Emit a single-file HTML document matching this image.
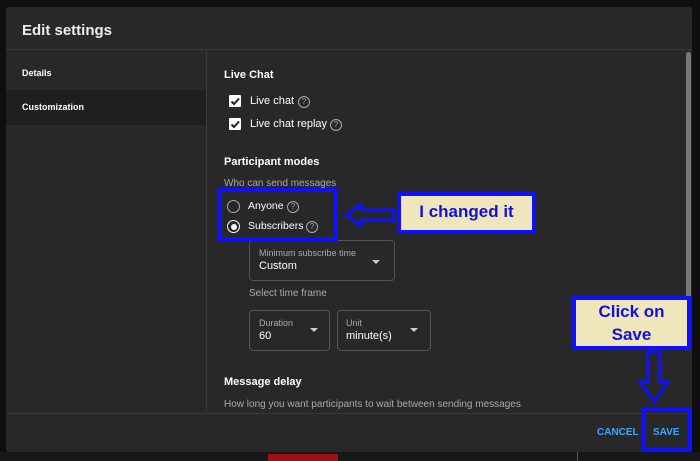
<!DOCTYPE html><html><head><style>
body{margin:0;width:700px;height:461px;background:#0f0f0f;font-family:"Liberation Sans",sans-serif;position:relative;overflow:hidden;color:#fff}
.a{position:absolute}
.dlg{left:6px;top:7px;width:686px;height:445px;background:#282828;border-radius:3px}
.g{color:#aaa;font-size:10px}
.cb{width:12px;height:12px;background:#fff;border-radius:1px}
.cb svg{display:block}
.q{width:10px;height:10px;border:1px solid #aaa;border-radius:50%;font-size:8px;color:#aaa;text-align:center;line-height:10px}
.box{border:1px solid #555;border-radius:4px}
.blue{border:4px solid #1010ff;box-sizing:border-box}
.y{background:#f0e6bc;color:#1010e0;font-weight:bold;font-size:17px;text-align:center}
</style></head><body>
<div class="a dlg"></div>
<div class="a" style="left:22px;top:22px;font-size:15px;font-weight:bold;color:#eee">Edit settings</div>
<div class="a" style="left:6px;top:49px;width:686px;height:1px;background:#3a3a3a"></div>
<div class="a" style="left:206px;top:50px;width:1px;height:363px;background:#3a3a3a"></div>
<div class="a" style="left:6px;top:90px;width:200px;height:35px;background:#1f1f1f"></div>
<div class="a" style="left:22px;top:68px;font-size:9px;font-weight:bold">Details</div>
<div class="a" style="left:22px;top:102px;font-size:9px;font-weight:bold">Customization</div>
<div class="a" style="left:686px;top:52px;width:5px;height:250px;background:#777;border-radius:3px"></div>
<div class="a" style="left:224px;top:69px;font-size:11px;font-weight:bold">Live Chat</div>
<div class="a cb" style="left:229px;top:95px"><svg width="12" height="12"><path d="M2.5 6.5l2.5 2.5L10 3.5" stroke="#222" stroke-width="2" fill="none"/></svg></div>
<div class="a" style="left:250px;top:95px;font-size:11px">Live chat</div>
<div class="a q" style="left:298px;top:96px">?</div>
<div class="a cb" style="left:229px;top:118px"><svg width="12" height="12"><path d="M2.5 6.5l2.5 2.5L10 3.5" stroke="#222" stroke-width="2" fill="none"/></svg></div>
<div class="a" style="left:250px;top:118px;font-size:11px">Live chat replay</div>
<div class="a q" style="left:330px;top:119px">?</div>
<div class="a" style="left:224px;top:156px;font-size:11px;font-weight:bold">Participant modes</div>
<div class="a g" style="left:224px;top:178px">Who can send messages</div>
<div class="a" style="left:227px;top:200px;width:11px;height:11px;border:1.5px solid #aaa;border-radius:50%"></div>
<div class="a" style="left:248px;top:200px;font-size:10.5px">Anyone</div>
<div class="a q" style="left:287px;top:201px">?</div>
<div class="a" style="left:227px;top:220px;width:11px;height:11px;border:1.5px solid #fff;border-radius:50%"><div style="margin:2.5px;width:6px;height:6px;background:#fff;border-radius:50%"></div></div>
<div class="a" style="left:248px;top:220px;font-size:10.5px">Subscribers</div>
<div class="a q" style="left:306px;top:221px">?</div>
<div class="a box" style="left:249px;top:240px;width:144px;height:39px"></div>
<div class="a g" style="left:259px;top:248px;font-size:9px">Minimum subscribe time</div>
<div class="a" style="left:259px;top:260px;font-size:11px">Custom</div>
<div class="a" style="left:372px;top:260px;border:4px solid transparent;border-top:4px solid #ccc"></div>
<div class="a g" style="left:249px;top:288px">Select time frame</div>
<div class="a box" style="left:249px;top:310px;width:79px;height:39px"></div>
<div class="a g" style="left:259px;top:318px;font-size:9px">Duration</div>
<div class="a" style="left:259px;top:330px;font-size:11px">60</div>
<div class="a" style="left:310px;top:328px;border:4px solid transparent;border-top:4px solid #ccc"></div>
<div class="a box" style="left:337px;top:310px;width:92px;height:39px"></div>
<div class="a g" style="left:346px;top:318px;font-size:9px">Unit</div>
<div class="a" style="left:346px;top:330px;font-size:11px">minute(s)</div>
<div class="a" style="left:410px;top:328px;border:4px solid transparent;border-top:4px solid #ccc"></div>
<div class="a" style="left:224px;top:376px;font-size:11px;font-weight:bold">Message delay</div>
<div class="a g" style="left:224px;top:399px">How long you want participants to wait between sending messages</div>
<div class="a" style="left:6px;top:413px;width:686px;height:1px;background:#3a3a3a"></div>
<div class="a" style="left:597px;top:427px;font-size:10px;color:#3ea6ff;font-weight:bold">CANCEL</div>
<div class="a" style="left:653px;top:427px;font-size:10px;color:#3ea6ff;font-weight:bold">SAVE</div>
<div class="a" style="left:0;top:452px;width:700px;height:9px;background:#181818"></div>
<div class="a" style="left:268px;top:454px;width:70px;height:7px;background:#a01010"></div>
<div class="a" style="left:577px;top:452px;width:1px;height:9px;background:#555"></div>
<div class="a blue" style="left:218px;top:188px;width:120px;height:53px"></div>
<div class="a blue y" style="left:397px;top:192px;width:139px;height:42px;line-height:32px">I changed it</div>
<svg class="a" style="left:343px;top:200px" width="55" height="30"><path d="M3 15L18 4v6h33v10H18v6z" fill="none" stroke="#1010ff" stroke-width="3"/></svg>
<div class="a blue y" style="left:572px;top:296px;width:119px;height:54px;line-height:23px">Click on<br>Save</div>
<svg class="a" style="left:638px;top:349px" width="34" height="56"><path d="M10 3h12v30h8L16 53 2 33h8z" fill="none" stroke="#1010ff" stroke-width="3"/></svg>
<div class="a blue" style="left:642px;top:407px;width:50px;height:44px"></div>
</body></html>
